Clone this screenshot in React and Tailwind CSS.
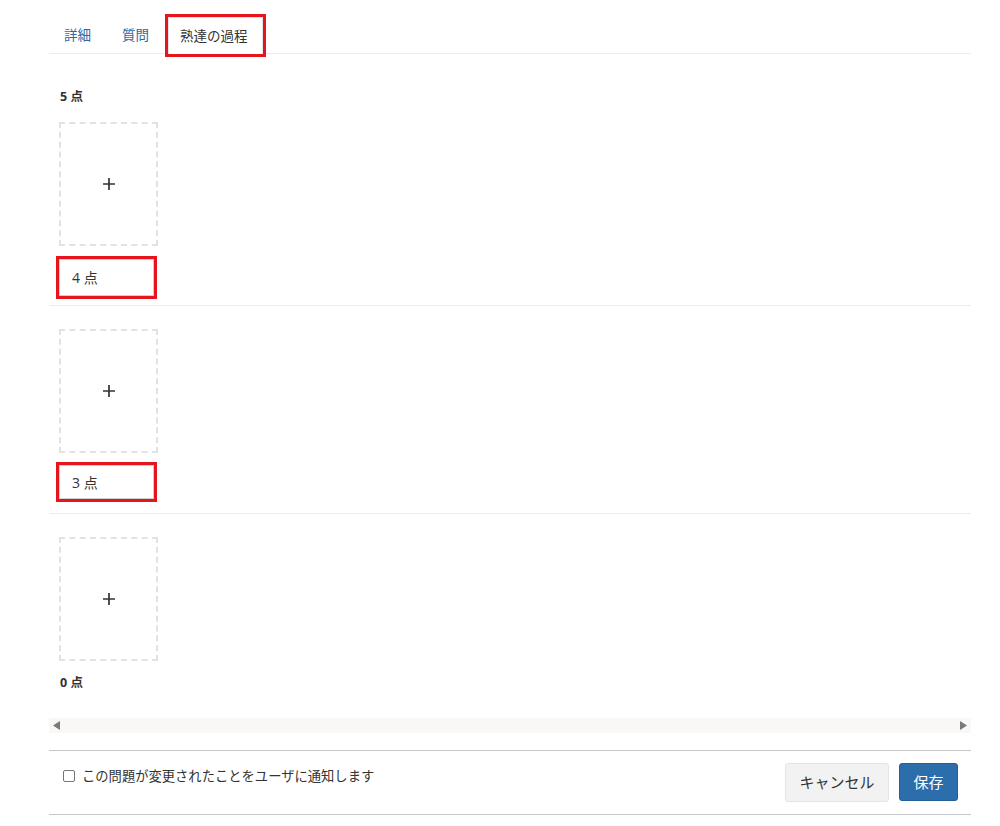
import React from "react";

const font = { fontFamily: '"Open Sans", "Noto Sans CJK JP", sans-serif' };

function Plus() {
  return (
    <svg width="14" height="14" viewBox="0 0 14 14">
      <path d="M7 1v12M1 7h12" stroke="#333" strokeWidth="1.7" fill="none" />
    </svg>
  );
}

function DropBox({ mt, h }) {
  return (
    <div className={`ml-[10px] w-[99px] border-2 border-dashed border-[#e2e2e2] flex items-center justify-center ${mt} ${h}`}>
      <Plus />
    </div>
  );
}

export default function App() {
  return (
    <div className="w-[1000px] h-[826px] bg-white text-[#333]" style={font}>
      <div className="ml-[49px] mr-[29px]">
        {/* Tabs */}
        <div className="flex pt-[17px] border-b border-[#ececec] h-[54px] text-[13.5px] leading-[36px]">
          <div className="pl-[15px] pr-[15px] text-[#2d6aa2]">詳細</div>
          <div className="pl-[16px] pr-[16px] text-[#2d6aa2]">質問</div>
          <div className="ml-[3px] w-[95px] pl-[11px] bg-white border border-[#e2e2e2] border-b-0 h-[37px] outline-[3px] outline-solid outline-[#e5141d] text-[#333] whitespace-nowrap">
            熟達の過程
          </div>
        </div>

        {/* 5 */}
        <div className="mt-[34px] ml-[11px] h-[18px] leading-[18px] text-[12.5px] font-bold">5 点</div>
        <DropBox mt="mt-[16px]" h="h-[124px]" />
        <div className="mt-[13px] ml-[10px] w-[95px] h-[37px] border border-[#cfcfcf] outline-[3px] outline-solid outline-[#e5141d] flex items-center pl-[12px] text-[14px]">
          4 点
        </div>
        <div className="mt-[9px] border-t border-[#ececec]" />

        {/* 4 */}
        <DropBox mt="mt-[23px]" h="h-[124px]" />
        <div className="mt-[12px] ml-[10px] w-[95px] h-[34px] border border-[#cfcfcf] outline-[3px] outline-solid outline-[#e5141d] flex items-center pl-[12px] text-[14px]">
          3 点
        </div>
        <div className="mt-[14px] border-t border-[#ececec]" />

        {/* 3 */}
        <DropBox mt="mt-[23px]" h="h-[124px]" />
        <div className="mt-[13px] ml-[11px] h-[18px] leading-[18px] text-[12.5px] font-bold">0 点</div>

        {/* scrollbar */}
        <div className="mt-[26px] h-[15px] bg-[#faf8f6] flex items-center justify-between px-[4px]">
          <svg width="7" height="9" viewBox="0 0 7 9"><path d="M7 0v9L0 4.5z" fill="#7a7a7a" /></svg>
          <svg width="7" height="9" viewBox="0 0 7 9"><path d="M0 0v9l7-4.5z" fill="#7a7a7a" /></svg>
        </div>

        {/* footer */}
        <div className="mt-[17px] border-t border-b border-[#c6c6cc] h-[65px] flex justify-between pl-[14px] pr-[13px]">
          <label className="flex items-center h-[18px] mt-[16px] text-[13.3px] leading-[18px] text-[#333]">
            <span className="w-[12px] h-[12px] border border-[#767676] rounded-[2px] mr-[7px] bg-white" />
            この問題が変更されたことをユーザに通知します
          </label>
          <div className="flex gap-[10px] mt-[12px] h-[39px]">
            <button className="w-[104px] h-[39px] bg-[#f2f2f2] border border-[#e4e4e4] rounded-[3px] text-[15px] text-[#333]">
              キャンセル
            </button>
            <button className="w-[59px] h-[38px] bg-[#2b6eab] border border-[#235f96] rounded-[3px] text-[15px] text-white">
              保存
            </button>
          </div>
        </div>
      </div>
    </div>
  );
}
